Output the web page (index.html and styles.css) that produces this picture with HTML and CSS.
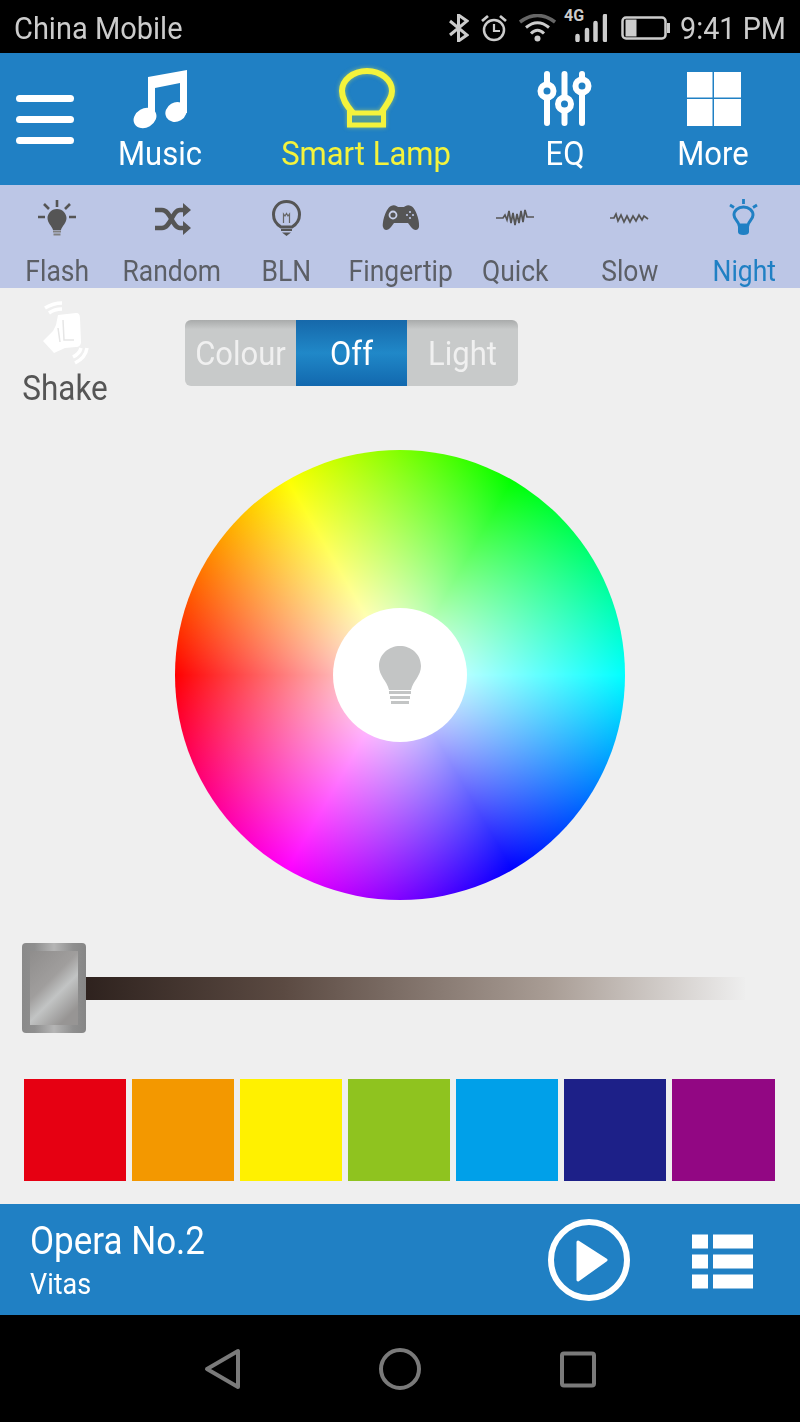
FILE: index.html
```html
<!DOCTYPE html>
<html lang="en">
<head>
  <meta charset="UTF-8">
  <title>Smart Lamp</title>
  <link rel="stylesheet" href="styles.css">
</head>
<body>

<!-- Status bar -->
<div class="status-bar">
  <span class="tall">China Mobile</span>
  <div class="status-right">
    <svg class="ic-bt" viewBox="0 0 21 28" width="21" height="28"><path d="M2 7 L19 21 L10.500 27 V1 L19 7 L2 21" fill="none" stroke="#ccc" stroke-width="3"/></svg>
    <svg class="ic-alarm" viewBox="0 0 26 28" width="26" height="28"><circle cx="13" cy="16" r="10" fill="none" stroke="#ccc" stroke-width="2.500"/><path d="M13 10 V17 H19" fill="none" stroke="#ccc" stroke-width="2.200"/><path d="M1 7 L7 2 M25 7 L19 2" stroke="#ccc" stroke-width="2.800"/></svg>
    <svg class="ic-wifi" viewBox="0 0 37 28" width="37" height="28"><path d="M1 8 Q18.500 -5 36 8" fill="none" stroke="#666" stroke-width="3.500"/><path d="M7 13.500 Q18.500 4 30 13.500" fill="none" stroke="#ccc" stroke-width="3"/><path d="M12 19.500 Q18.500 13 25 19.500" fill="none" stroke="#ccc" stroke-width="3"/><circle cx="18.500" cy="24.500" r="3" fill="#ccc"/></svg>
    <div class="signal">
      <span class="signal-4g">4G</span>
      <svg viewBox="0 0 32 28" width="32" height="28"><path d="M2.500 26 V22 M12 26 V16 M20.500 26 V9 M30 26 V2" stroke="#ccc" stroke-width="4.500" stroke-linecap="round"/></svg>
    </div>
    <svg class="ic-batt" viewBox="0 0 49 24" width="49" height="24"><rect x="1.500" y="1.500" width="43" height="21" rx="3.500" fill="none" stroke="#ccc" stroke-width="2.500"/><rect x="4.500" y="3.500" width="11" height="17" fill="#ccc"/><rect x="46" y="7" width="3" height="10" fill="#ccc"/></svg>
    <span class="clock tall">9:41 PM</span>
  </div>
</div>

<!-- Main tabs -->
<div class="top-tabs">
  <div class="hamburger"><span></span><span></span><span></span></div>
  <div class="top-tab">
    <svg viewBox="0 0 60 92" width="60" height="92"><path d="M18 14 L57 7 V50 H50 V20 L25 25 V56 H18 Z" fill="#fff"/><ellipse cx="15" cy="55" rx="12" ry="9.500" fill="#fff" transform="rotate(-30 15 55)"/><ellipse cx="46" cy="49" rx="11" ry="9.500" fill="#fff" transform="rotate(-30 46 49)"/></svg>
    <span class="tall">Music</span>
  </div>
  <div class="top-tab active">
    <svg class="lamp" viewBox="0 0 60 92" width="60" height="92"><path d="M17 50 C10 42 6 36 6 28 C6 17 17 8 31 8 C45 8 56 17 56 28 C56 36 50 42 45 50" fill="none" stroke="#f4f33c" stroke-width="6"/><rect x="13.500" y="50" width="34" height="12" fill="#4f9a9a" stroke="#f4f33c" stroke-width="5"/></svg>
    <span class="tall">Smart Lamp</span>
  </div>
  <div class="top-tab">
    <svg viewBox="0 0 60 92" width="60" height="92"><path d="M12 11 V60 M29.500 11 V60 M47 11 V60" stroke="#fff" stroke-width="6" stroke-linecap="round"/><circle cx="12" cy="28" r="6.500" fill="#2080c4" stroke="#fff" stroke-width="6"/><circle cx="29.500" cy="41" r="6.500" fill="#2080c4" stroke="#fff" stroke-width="6"/><circle cx="47" cy="23" r="6.500" fill="#2080c4" stroke="#fff" stroke-width="6"/></svg>
    <span class="tall">EQ</span>
  </div>
  <div class="top-tab">
    <svg viewBox="0 0 60 92" width="60" height="92"><path d="M4 9 H29.500 V34.500 H4 Z M31 9 H58 V34.500 H31 Z M4 36 H29.500 V63 H4 Z M31 36 H58 V63 H31 Z" fill="#fff"/></svg>
    <span class="tall">More</span>
  </div>
</div>

<!-- Lamp modes -->
<div class="mode-tabs">
  <div class="mode-tab">
    <svg viewBox="0 0 44 44" width="44" height="44"><path d="M22 13 C28 13 31.500 18 31.500 22 C31.500 27 27 30 26 34 H18 C17 30 12.500 27 12.500 22 C12.500 18 16 13 22 13 Z" fill="#555"/><path d="M18 35.500 H26 M18.500 38.500 H25.500" stroke="#808080" stroke-width="2.200"/><path d="M22 4 V11 M9 8 L14 13 M35 8 L30 13 M3 21 H10 M34 21 H41" stroke="#555" stroke-width="2.600"/></svg>
    <span class="tall">Flash</span>
  </div>
  <div class="mode-tab">
    <svg viewBox="0 0 44 44" width="44" height="44"><path d="M5 14 H12 C21 14 22 32 30 32 H35 M5 32 H12 C21 32 22 14 30 14 H35" fill="none" stroke="#555" stroke-width="4.500"/><path d="M33 7 L41 14 L33 21 Z M33 25 L41 32 L33 39 Z" fill="#555"/></svg>
    <span class="tall">Random</span>
  </div>
  <div class="mode-tab">
    <svg viewBox="0 0 44 44" width="44" height="44"><path d="M17 31 C12 28 9.500 24 9.500 18.500 C9.500 11 15 5.500 22.500 5.500 C30 5.500 35.500 11 35.500 18.500 C35.500 24 33 28 28 31 Z" fill="none" stroke="#555" stroke-width="3"/><path d="M19.500 27 V18 L21 20 L22.500 17.500 L24 20 L25.500 18 V27" fill="none" stroke="#666" stroke-width="1.200"/><path d="M17 33 H28 V35 H17 Z M18 36.500 H27 L22.500 40 Z" fill="#555"/></svg>
    <span class="tall">BLN</span>
  </div>
  <div class="mode-tab">
    <svg viewBox="0 0 44 44" width="44" height="44"><path d="M12 10 C15 8 18 10 19 11 H25 C26 10 29 8 32 10 C37 12 41 26 40 31 C39 35 35 35 32 31 L29 27 H15 L12 31 C9 35 5 35 4 31 C3 26 7 12 12 10 Z" fill="#555"/><circle cx="14" cy="19" r="3.500" fill="#555" stroke="#c8d0ea" stroke-width="1.800"/><circle cx="28" cy="19" r="1.100" fill="#bcc6e6"/><circle cx="31" cy="16" r="1.100" fill="#bcc6e6"/><circle cx="31" cy="22" r="1.100" fill="#bcc6e6"/><circle cx="34" cy="19" r="1.100" fill="#bcc6e6"/></svg>
    <span class="tall">Fingertip</span>
  </div>
  <div class="mode-tab">
    <svg viewBox="0 0 44 44" width="44" height="44"><path d="M3 22 H10 L12 19 L14 24 L16 15 L18 27 L20 17 L22 29 L24 18 L26 27 L28 15 L30 26 L32 14 L34 21 H41" fill="none" stroke="#555" stroke-width="1.700"/></svg>
    <span class="tall">Quick</span>
  </div>
  <div class="mode-tab">
    <svg viewBox="0 0 44 44" width="44" height="44"><path d="M2 22 H6 L8 18 L10 25 L13 19 L16 26 L19 20 L22 26 L25 20 L28 25 L31 19 L34 24 L36 20 L40 23" fill="none" stroke="#555" stroke-width="1.700"/></svg>
    <span class="tall">Slow</span>
  </div>
  <div class="mode-tab active">
    <svg viewBox="0 0 44 44" width="44" height="44"><path d="M17 29 C16 25 12 23 12 19 C12 14.500 16 11 21.500 11 C27 11 31 14.500 31 19 C31 23 27 25 26 29 Z" fill="none" stroke="#2080c4" stroke-width="3"/><path d="M16 30 H27 V36 C27 38 25 39 21.500 39 C18 39 16 38 16 36 Z" fill="#2080c4"/><path d="M21.500 3 V8 M8 9 L12 11.500 M35 9 L31 11.500" stroke="#2080c4" stroke-width="2.800"/></svg>
    <span class="tall">Night</span>
  </div>
</div>

<div class="content">
  <div class="controls-row">
    <div class="shake">
      <svg viewBox="0 0 52 68" width="52" height="68"><path d="M19 17 L37 15 C40 15 41 17 41 20 L42 44 C42 47 40 49 37 49 L26 50 L15 55 L4 43 L14 33 L17 27 Z" fill="#fff"/><path d="M24 22 L25 42 H35 M19 30 L21 44" fill="none" stroke="#e6e6e6" stroke-width="1.500"/><path d="M6 10 C11 7 16 5 23 5 M10 15 C14 12 18 11 23 11" fill="none" stroke="#fff" stroke-width="3.500"/><path d="M48 50 C47 57 42 62 36 65 M42 50 C41 54 38 57 34 59" fill="none" stroke="#fff" stroke-width="3.500"/></svg>
      <span class="tall">Shake</span>
    </div>
    <div class="segment">
      <div class="seg-btn"><span class="tall">Colour</span></div>
      <div class="seg-btn on"><span class="tall">Off</span></div>
      <div class="seg-btn"><span class="tall">Light</span></div>
    </div>
  </div>

  <div class="wheel">
    <div class="wheel-center">
      <svg viewBox="0 0 44 60" width="44" height="60"><path d="M22 1 C33 1 43 9 43 21 C43 31 35 36 33 45 H11 C9 36 1 31 1 21 C1 9 11 1 22 1 Z" fill="#c3c5c5"/><path d="M11 47.500 H33 M12 52.500 H32 M13 57.500 H31" stroke="#c3c5c5" stroke-width="3"/></svg>
    </div>
  </div>

  <div class="slider">
    <div class="thumb"><div class="thumb-face"></div></div>
    <div class="track"></div>
  </div>

  <div class="swatches">
    <div class="swatch red"></div>
    <div class="swatch orange"></div>
    <div class="swatch yellow"></div>
    <div class="swatch green"></div>
    <div class="swatch sky"></div>
    <div class="swatch navy"></div>
    <div class="swatch purple"></div>
  </div>
</div>

<!-- Now playing -->
<div class="player">
  <div class="track-info">
    <div class="song tall">Opera No.2</div>
    <div class="artist tall">Vitas</div>
  </div>
  <svg class="play" viewBox="0 0 84 84" width="84" height="84"><circle cx="42" cy="42" r="38" fill="none" stroke="#fff" stroke-width="6"/><path d="M31 24 L59 42 L31 62 Z" fill="#fff" stroke="#fff" stroke-width="3" stroke-linejoin="round"/></svg>
  <svg class="list" viewBox="0 0 62 56" width="62" height="56"><path d="M1 1.500 H17 V15.500 H1 Z M22 1.500 H62 V15.500 H22 Z M1 21.500 H17 V35.500 H1 Z M22 21.500 H62 V35.500 H22 Z M1 41.500 H17 V55.500 H1 Z M22 41.500 H62 V55.500 H22 Z" fill="#fff"/></svg>
</div>

<!-- Android nav -->
<div class="nav-bar">
  <svg viewBox="0 0 40 44" width="40" height="44"><path d="M38 4 V40 L7 22 Z" fill="none" stroke="#7a7a7a" stroke-width="4" stroke-linejoin="round"/></svg>
  <svg viewBox="0 0 44 44" width="44" height="44"><circle cx="22" cy="22" r="19" fill="none" stroke="#7a7a7a" stroke-width="4"/></svg>
  <svg viewBox="0 0 40 40" width="40" height="40"><rect x="2" y="4.500" width="32" height="32" rx="2" fill="none" stroke="#7a7a7a" stroke-width="4"/></svg>
</div>

</body>
</html>
```

FILE: styles.css
```css
* {
  box-sizing: border-box;
}
body {
  margin: 0;
  width: 800px;
  height: 1422px;
  overflow: hidden;
  font-family: Roboto, sans-serif;
  background: #efefef;
  display: flex;
  flex-direction: column;
}

/* the screenshot is slightly stretched, so its text runs tall */
.tall {
  display: inline-block;
  transform: scaleY(1.1);
}

/* status bar */
.status-bar {
  height: 53px;
  background: #000;
  color: #ccc;
  display: flex;
  align-items: center;
  justify-content: space-between;
  padding: 2px 14px 0;
  font-size: 29px;
}
.status-right {
  display: flex;
  align-items: center;
  gap: 12px;
}
.ic-wifi {
  margin-right: 7px;
}
.ic-batt {
  margin-left: 2px;
}
.clock {
  font-size: 28.800px;
  margin-left: -2px;
}
.signal {
  position: relative;
  height: 28px;
}
.signal-4g {
  position: absolute;
  left: -11px;
  top: -6px;
  font-size: 16px;
  line-height: 16px;
  font-weight: bold;
}

/* main tabs */
.top-tabs {
  height: 132px;
  background: #2080c4;
  display: grid;
  grid-template-columns: 90px 140px 272px 126px 170px;
  color: #fff;
}
.hamburger {
  display: flex;
  flex-direction: column;
  gap: 14px;
  padding: 42px 0 0 16px;
}
.hamburger span {
  display: block;
  width: 58px;
  height: 7px;
  background: #fff;
  border-radius: 4px;
}
.top-tab {
  display: flex;
  flex-direction: column;
  align-items: center;
  font-size: 31px;
  line-height: 36px;
  padding-top: 10px;
}
.top-tab svg {
  margin-bottom: -19px;
}
.top-tab .lamp {
  filter: drop-shadow(0 0 2px rgba(244, 243, 60, 0.5));
}
.top-tab.active {
  color: #f4f33c;
}

/* lamp modes */
.mode-tabs {
  height: 103px;
  background: #bcc6e6;
  display: grid;
  grid-template-columns: repeat(7, 114.500px);
  color: #5c5f66;
}
.mode-tab {
  display: flex;
  flex-direction: column;
  align-items: center;
  font-size: 26.500px;
  line-height: 32px;
  padding-top: 11px;
}
.mode-tab svg {
  margin-bottom: 15px;
}
.mode-tab.active {
  color: #2080c4;
}

/* content area */
.content {
  flex: 1;
  padding: 0 24px;
  display: flex;
  flex-direction: column;
}
.controls-row {
  height: 162px;
  display: flex;
  align-items: flex-start;
}
.shake {
  width: 84px;
  margin-left: -1px;
  padding-top: 10px;
  display: flex;
  flex-direction: column;
  align-items: center;
  font-size: 31.500px;
  line-height: 36px;
  color: #555;
}
.shake svg {
  margin-bottom: 5px;
}
.segment {
  margin: 32px 0 0 78px;
  width: 333px;
  height: 66px;
  display: flex;
  border-radius: 6px;
  overflow: hidden;
}
.seg-btn {
  flex: 1;
  display: flex;
  align-items: center;
  justify-content: center;
  font-size: 31px;
  color: #f0f0f0;
  background: linear-gradient(#a9abab, #c8caca 14%, #c8caca);
}
.seg-btn.on {
  color: #fff;
  background: linear-gradient(#1668aa, #2088c8 50%, #1268ae);
}

/* colour wheel */
.wheel {
  width: 450px;
  height: 450px;
  margin: 0 auto;
  border-radius: 50%;
  display: flex;
  align-items: center;
  justify-content: center;
  background:
    radial-gradient(circle closest-side, #fff 0%, rgba(255,255,255,0) 100%),
    conic-gradient(from 270deg, #f00, #ff0, #0f0, #0ff, #00f, #f0f, #f00);
}
.wheel-center {
  width: 134px;
  height: 134px;
  border-radius: 50%;
  background: #fff;
  display: flex;
  align-items: center;
  justify-content: center;
}

/* brightness slider */
.slider {
  margin: 43px 0 0 -2px;
  height: 90px;
  display: flex;
  align-items: center;
}
.thumb {
  width: 64px;
  height: 90px;
  border-radius: 4px;
  padding: 8px;
  background: linear-gradient(90deg, #8a8a8a, #8f8f8f 20%, #b5b5b5 50%, #8f8f8f 80%, #868686);
}
.thumb-face {
  height: 100%;
  background: linear-gradient(135deg, #8f8d8c, #a09e9d 40%, #c2c4c4 58%, #979594 85%);
}
.track {
  width: 659px;
  height: 23px;
  background: linear-gradient(90deg, #2e221e, #5b4a42 30%, #a89c94 70%, #eeeeee);
}

/* colour presets */
.swatches {
  margin-top: 46px;
  display: flex;
  gap: 6px;
}
.swatch {
  width: 102px;
  height: 102px;
}
.red { background: #e60012; }
.orange { background: #f39800; }
.yellow { background: #fff100; }
.green { background: #8fc31f; }
.sky { background: #00a0e9; }
.navy { background: #1d2088; }
.purple { background: #920783; width: 103px; }

/* player */
.player {
  height: 111px;
  background: #2080c4;
  color: #fff;
  display: flex;
  align-items: center;
  padding: 0 47px 0 30px;
}
.track-info {
  flex: 1;
  padding-top: 1px;
}
.song {
  display: block;
  font-size: 35px;
  line-height: 40px;
}
.artist {
  display: block;
  font-size: 27px;
  line-height: 30px;
  margin-top: 7px;
}
.list {
  margin-left: 60px;
  margin-top: 3px;
}

/* android nav */
.nav-bar {
  height: 107px;
  background: #000;
  display: flex;
  align-items: center;
  justify-content: center;
  gap: 138px;
}
```
